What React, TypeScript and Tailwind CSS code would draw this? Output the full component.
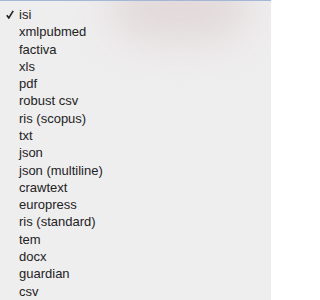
const formats = [
  "isi",
  "xmlpubmed",
  "factiva",
  "xls",
  "pdf",
  "robust csv",
  "ris (scopus)",
  "txt",
  "json",
  "json (multiline)",
  "crawtext",
  "europress",
  "ris (standard)",
  "tem",
  "docx",
  "guardian",
  "csv",
];

export default function App() {
  return (
    <div className="relative w-[271px] h-[300px] overflow-hidden bg-[#efeeef] border-t border-[#a3b8d6] font-['Liberation_Sans',Arial,sans-serif]">
      {/* blurred backdrop showing through the menu */}
      <div className="absolute left-[110px] -top-[30px] w-[140px] h-[70px] rounded-full bg-[#e2d9d9] blur-[20px]" />
      <ul className="relative pt-[5px]">
        {formats.map((f, i) => (
          <li key={f} className="flex items-center h-[17.3px] text-[13px] text-[#222]">
            <span className="w-[19px] flex justify-center pl-[1px]">
              {i === 0 && (
                <svg width="8" height="9" viewBox="0 0 8 9">
                  <path d="M0.8 5.2 L2.8 8 L7.2 0.8" fill="none" stroke="#222" strokeWidth="1.6" />
                </svg>
              )}
            </span>
            <span>{f}</span>
          </li>
        ))}
      </ul>
    </div>
  );
}
